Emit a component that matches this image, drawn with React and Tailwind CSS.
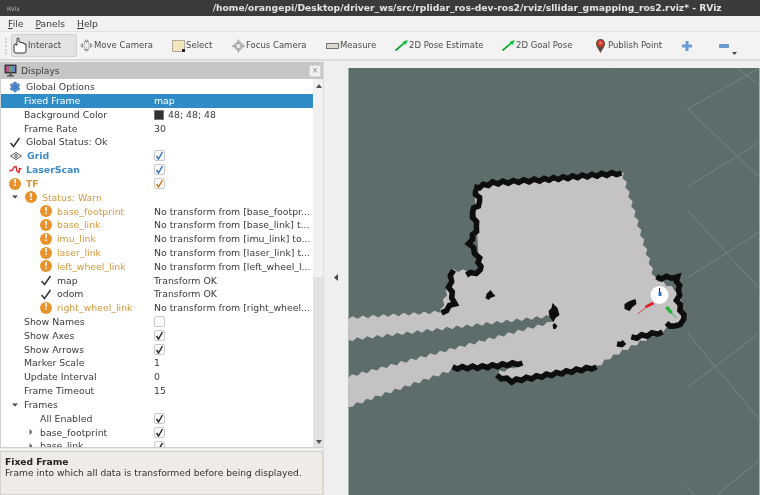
import React from "react";
import { Settings } from "lucide-react";

const font = { fontFamily: '"DejaVu Sans", sans-serif' };

// zigzag along a polyline so the map edges look like occupancy grid cells
function jag(points, amp = 1.6, step = 5) {
  const out = [];
  let flip = false;
  for (let i = 0; i < points.length - 1; i++) {
    const [x1, y1] = points[i];
    const [x2, y2] = points[i + 1];
    const len = Math.hypot(x2 - x1, y2 - y1);
    const n = Math.max(1, Math.round(len / step));
    for (let k = 0; k < n; k++) {
      const t = k / n;
      const d = flip ? amp : -amp;
      flip = !flip;
      out.push([
        x1 + (x2 - x1) * t + (-(y2 - y1) / len) * d,
        y1 + (y2 - y1) * t + ((x2 - x1) / len) * d,
      ]);
    }
  }
  out.push(points[points.length - 1]);
  return out.map((p) => p[0].toFixed(1) + "," + p[1].toFixed(1)).join(" ");
}

const freeSpace = [
  [475, 188], [623, 173], [655, 278], [680, 292], [684, 322], [668, 328], [610, 358],
  [597, 367], [512, 383], [497, 378], [500, 372], [524, 364], [453, 370], [348, 407],
  [348, 377], [553, 322], [552, 316], [348, 340], [348, 318], [440, 312], [442, 310],
  [453, 270], [480, 272],
];

const walls = [
  [[475, 188], [493, 183], [540, 180], [573, 177], [622, 173]],
  [[475, 190], [481, 202], [472, 212], [478, 227], [470, 243], [479, 258], [481, 271], [467, 275]],
  [[453, 270], [450, 287], [455, 303], [442, 313]],
  [[657, 278], [677, 277], [680, 290], [678, 300], [685, 320], [675, 327], [667, 323]],
  [[632, 338], [663, 332]],
  [[618, 345], [625, 342]],
  [[497, 376], [512, 381], [597, 367]],
  [[453, 368], [483, 367], [523, 363]],
];

function MapView() {
  return (
    <svg viewBox="349 68 411 427" className="block w-full h-full">
      <rect x="349" y="68" width="411" height="427" fill="#5c6d6c" />
      <g stroke="#7d8b8a" strokeWidth="0.8" fill="none">
        <path d="M760 68 L688 109 L760 177 M737 68 L760 85 M688 187 L760 142 M688 210 L760 289 M688 278 L760 232 M688 333 L760 420 M688 387 L760 333 M688 487 L695 495 M717 495 L760 460" />
      </g>
      <g stroke="#677877" strokeOpacity="0.6" strokeWidth="1" fill="none">
        <path d="M640 428 L688 387 M640 428 L688 487 M640 428 L560 495 M400 400 L470 495 M688 109 L610 68 M688 187 L640 215" />
      </g>
      <polygon points={jag(freeSpace, 1.5, 5)} fill="#c4c2c3" />
      <g stroke="#0e0e0e" strokeWidth="5.5" fill="none" strokeLinejoin="miter">
        {walls.map((w, i) => (
          <polyline key={i} points={jag(w, 1.2, 5)} />
        ))}
      </g>
      <g fill="#0e0e0e">
        <polygon points="487,294 491,290 494,294 496,296 491,298 489,300 486,298" />
        <polygon points="553,303 558,308 560,315 556,318 554,322 550,317 549,311 552,308" />
        <polygon points="553,325 555,323 558,326 556,329 554,329" />
        <polygon points="625,304 630,301 636,299 637,304 633,307 630,311 625,309" />
      </g>
      <circle cx="660" cy="295" r="9" fill="#ffffff" />
      <path d="M660 288 V296" stroke="#222" strokeWidth="1" />
      <rect x="659" y="292" width="3" height="4" fill="#2f74b5" />
      <path d="M654 303 L646 307" stroke="#e02222" strokeWidth="3" />
      <path d="M647 307 L638 314" stroke="#c9504f" strokeWidth="1" />
      <path d="M667 307 L672 313" stroke="#23b23a" strokeWidth="3.5" />
      <path d="M671 312 L677 318" stroke="#3cb04e" strokeWidth="1" />
    </svg>
  );
}

function Hand() {
  return (
    <svg width="15" height="17" viewBox="0 0 15 17" fill="#fff" stroke="#222" strokeWidth="0.9">
      <path d="M1 8 V14 Q1 16 3 16 H11 Q13 16 13 14 V7 H11 V6 H9 V5.5 H7.5 V5 H6 V1.5 Q5 0.5 4 1.5 V8 H3 V7 Q2 6.5 1 8 Z" />
    </svg>
  );
}

function MoveIcon() {
  return (
    <svg width="13" height="13" viewBox="0 0 13 13" fill="none" stroke="#8a9096" strokeWidth="1">
      <path d="M6.5 0.5 L8.5 2.5 H4.5 Z M6.5 12.5 L8.5 10.5 H4.5 Z M0.5 6.5 L2.5 4.5 V8.5 Z M12.5 6.5 L10.5 4.5 V8.5 Z" />
      <rect x="4" y="4" width="5" height="5" strokeDasharray="1 1" />
    </svg>
  );
}

function SelectIcon() {
  return (
    <svg width="13" height="12" viewBox="0 0 13 12">
      <rect x="0.5" y="0.5" width="12" height="11" fill="#f3e6bf" stroke="#77756c" strokeWidth="0.8" strokeDasharray="1.5 0.7" />
      <rect x="10" y="9" width="3" height="3" fill="#222" />
    </svg>
  );
}

function FocusIcon() {
  return (
    <svg width="14" height="14" viewBox="0 0 14 14">
      <path d="M7 0 L14 7 L7 14 L0 7 Z" fill="#c4c4c0" />
      <path d="M7 0 V14 M0 7 H14" stroke="#90908c" strokeWidth="0.8" />
      <circle cx="7" cy="7" r="3" fill="#e6e6e3" stroke="#8b8b87" strokeWidth="0.8" />
    </svg>
  );
}

function RulerIcon() {
  return (
    <svg width="13" height="6" viewBox="0 0 13 6">
      <rect x="0.5" y="0.5" width="12" height="5" fill="#dcdad0" stroke="#75736c" strokeWidth="1" />
    </svg>
  );
}

function PoseIcon() {
  return (
    <svg width="13" height="11" viewBox="0 0 13 11">
      <path d="M0.5 10.5 L11 1.5" stroke="#12c13a" strokeWidth="1.8" />
      <path d="M13 0 L7.5 1.8 L10.5 5 Z" fill="#12c13a" />
      <path d="M0.5 10.5 L6 5.8" stroke="#0c7a28" strokeWidth="0.8" />
    </svg>
  );
}

function PinIcon() {
  return (
    <svg width="9" height="14" viewBox="0 0 9 14">
      <path d="M4.5 14 L1 8 Q0 6.5 0 4.5 A4.5 4.5 0 0 1 9 4.5 Q9 6.5 8 8 Z" fill="#5f4a3f" />
      <circle cx="4.5" cy="4.5" r="3.4" fill="#cf3a2c" />
      <circle cx="4.5" cy="4" r="1.3" fill="#e88c80" />
    </svg>
  );
}

function PlusIcon() {
  return (
    <svg width="10" height="10" viewBox="0 0 10 10">
      <path d="M3.5 0 H6.5 V3.5 H10 V6.5 H6.5 V10 H3.5 V6.5 H0 V3.5 H3.5 Z" fill="#6b9ad0" />
    </svg>
  );
}

function MinusIcon() {
  return (
    <svg width="10" height="4" viewBox="0 0 10 4">
      <rect width="10" height="4" rx="1" fill="#6b9ad0" />
    </svg>
  );
}

function MonitorIcon() {
  return (
    <svg width="13" height="13" viewBox="0 0 13 13">
      <rect x="0.5" y="0.5" width="12" height="9" fill="#3a3a44" />
      <rect x="2" y="2" width="3" height="6" fill="#b0568c" />
      <rect x="5" y="2" width="3" height="6" fill="#5ea85e" />
      <rect x="8" y="2" width="3" height="6" fill="#6a8ac0" />
      <rect x="5" y="10" width="3" height="1.5" fill="#555" />
      <rect x="3" y="11.5" width="7" height="1" fill="#333" />
    </svg>
  );
}

function Warn() {
  return (
    <span className="flex items-center justify-center w-[12px] h-[12px] rounded-full bg-[#e8922c] text-white text-[9px] font-bold leading-none shrink-0">
      !
    </span>
  );
}

function Tick() {
  return (
    <svg width="12" height="11" viewBox="0 0 12 11" fill="none" className="shrink-0">
      <path d="M1.5 6 L4.5 9.5 L10.5 1" stroke="#333" strokeWidth="1.5" />
    </svg>
  );
}

function Eye() {
  return (
    <svg width="12" height="8" viewBox="0 0 12 8" fill="none" stroke="#555" strokeWidth="1" className="shrink-0">
      <path d="M0.5 4 L6 0.5 L11.5 4 L6 7.5 Z" />
      <circle cx="6" cy="4" r="1.4" />
    </svg>
  );
}

function Laser() {
  return (
    <svg width="13" height="9" viewBox="0 0 13 9" fill="none" className="shrink-0">
      <path d="M0.5 6 L3.5 5 L5 2 L7 1.5 L8 6 L10 7.5 L10.5 3.5 L12.5 4" stroke="#e8202a" strokeWidth="1.4" />
    </svg>
  );
}

function Check({ on, color }) {
  return (
    <span className="flex items-center justify-center w-[11px] h-[11px] border border-[#c9c9c9] rounded-[2px] bg-[#fbfbfb]">
      {on && (
        <svg width="9" height="9" viewBox="0 0 9 9" fill="none">
          <path d="M1.5 5 L3.5 8 L7.5 1" stroke={color || "#222"} strokeWidth="1.4" />
        </svg>
      )}
    </span>
  );
}

function Triangle({ open }) {
  return (
    <svg width="6" height="6" viewBox="0 0 6 6" className="shrink-0">
      {open ? <path d="M0 1.5 H6 L3 4.5 Z" fill="#444" /> : <path d="M1.5 0 V6 L4.5 3 Z" fill="#666" />}
    </svg>
  );
}

const tools = [
  { label: "Move Camera", icon: <MoveIcon />, cls: "ml-[3px] w-[92px]" },
  { label: "Select", icon: <SelectIcon />, cls: "w-[60px]" },
  { label: "Focus Camera", icon: <FocusIcon />, cls: "w-[94px]" },
  { label: "Measure", icon: <RulerIcon />, cls: "w-[69px]" },
  { label: "2D Pose Estimate", icon: <PoseIcon />, cls: "w-[107px]" },
  { label: "2D Goal Pose", icon: <PoseIcon />, cls: "w-[92px]" },
  { label: "Publish Point", icon: <PinIcon />, cls: "w-[88px]" },
];

const warnFrames = [
  ["base_footprint", "No transform from [base_footpr..."],
  ["base_link", "No transform from [base_link] t..."],
  ["imu_link", "No transform from [imu_link] to..."],
  ["laser_link", "No transform from [laser_link] t..."],
  ["left_wheel_link", "No transform from [left_wheel_l..."],
];

function Row({ pad, children, value, selected, className }) {
  return (
    <div className={`flex items-center h-[13.82px] ${selected ? "bg-[#308cc6] text-white" : ""}`}>
      <div className={`flex items-center w-[153px] shrink-0 whitespace-nowrap ${pad} ${className || ""}`}>{children}</div>
      <div className="flex items-center gap-[4px] whitespace-nowrap">{value}</div>
    </div>
  );
}

function FrameRow({ name, value, ok }) {
  return (
    <Row pad="pl-[39px] gap-[5px]" className={ok ? "" : "text-[#d2983c]"} value={value}>
      {ok ? <Tick /> : <Warn />}
      {name}
    </Row>
  );
}

export default function App() {
  return (
    <div className="w-[760px] h-[495px] overflow-hidden flex flex-col bg-[#efefef] text-[#3a3a3a] blur-[0.35px]" style={font}>
      <div className="h-[16px] shrink-0 bg-[#3b3b3b] flex items-center">
        <span className="pl-[7px] text-[6px] text-[#bbb]">RViz</span>
        <span className="ml-[193px] text-[9.2px] font-bold text-[#e4e4e4] whitespace-nowrap">
          /home/orangepi/Desktop/driver_ws/src/rplidar_ros-dev-ros2/rviz/sllidar_gmapping_ros2.rviz* - RViz
        </span>
      </div>

      <div className="h-[16px] shrink-0 bg-[#f1f1f1] flex items-center gap-[12px] pl-[8px] text-[9.2px] border-b border-[#e2e2e2]">
        <span><u>F</u>ile</span>
        <span><u>P</u>anels</span>
        <span><u>H</u>elp</span>
      </div>

      <div className="h-[29px] shrink-0 bg-[#f3f3f3] border-b-2 border-[#dcdcdc] flex items-center pl-[5px] text-[8.5px] text-[#4a4a4a]">
        <div className="w-[2px] h-[16px] mr-[4px] border-l-2 border-dotted border-[#d4d4d4]" />
        <div className="w-[66px] h-[23px] bg-[#e3e3e3] border border-[#cfcfcf] rounded-[2px] flex items-center pl-[1px]">
          <Hand />
          Interact
        </div>
        {tools.map((t) => (
          <div key={t.label} className={`flex items-center gap-[1px] whitespace-nowrap ${t.cls}`}>
            <span className="flex justify-center w-[13px]">{t.icon}</span>
            {t.label}
          </div>
        ))}
        <div className="w-[37px] flex"><PlusIcon /></div>
        <div className="w-[10px] flex"><MinusIcon /></div>
        <svg width="5" height="3" viewBox="0 0 5 3" className="mt-[15px] ml-[3px]">
          <path d="M0 0 H5 L2.5 3 Z" fill="#444" />
        </svg>
      </div>

      <div className="flex flex-1 min-h-0">
        <div className="w-[324px] shrink-0 flex flex-col pt-[1px] border-r border-[#dcdcdc]">
          <div className="h-[17px] bg-[#c6c6c6] flex items-center pl-[4px] gap-[4px] text-[9.2px] shrink-0">
            <MonitorIcon />
            <span className="flex-1">Displays</span>
            <span className="flex items-center justify-center w-[12px] h-[12px] mr-[2px] bg-[#f1f1f1] border border-[#d6d6d6] text-[8px] text-[#888] leading-none">×</span>
          </div>

          <div className="flex h-[369px] shrink-0 bg-white border-l border-[#cfcfcf] border-b text-[9.35px] leading-none overflow-hidden">
            <div className="w-[312px] shrink-0 pt-[1px] overflow-hidden">
              <Row pad="pl-[8px] gap-[5px]" value="">
                <Settings size={12} className="shrink-0 text-[#5b8ed0]" fill="#5b8ed0" stroke="#3f74bb" />
                Global Options
              </Row>
              <Row pad="pl-[23px]" value="map" selected>Fixed Frame</Row>
              <Row pad="pl-[23px]" value={<><span className="w-[10px] h-[10px] bg-[#303030] border border-[#777]" />48; 48; 48</>}>Background Color</Row>
              <Row pad="pl-[23px]" value="30">Frame Rate</Row>
              <Row pad="pl-[8px] gap-[5px]" value="">
                <Tick />
                Global Status: Ok
              </Row>
              <Row pad="pl-[9px] gap-[5px]" className="font-bold text-[#3d8ac8]" value={<Check on color="#2f6fc0" />}>
                <Eye />
                Grid
              </Row>
              <Row pad="pl-[8px] gap-[4px]" className="font-bold text-[#3d8ac8]" value={<Check on color="#2f6fc0" />}>
                <Laser />
                LaserScan
              </Row>
              <Row pad="pl-[8px] gap-[5px]" className="font-bold text-[#d2983c]" value={<Check on color="#d0701a" />}>
                <Warn />
                TF
              </Row>
              <Row pad="pl-[11px] gap-[5px]" className="text-[#d2983c]" value="">
                <Triangle open />
                <span className="ml-[2px]"><Warn /></span>
                Status: Warn
              </Row>
              {warnFrames.map(([name, value]) => (
                <FrameRow key={name} name={name} value={value} />
              ))}
              <FrameRow name="map" value="Transform OK" ok />
              <FrameRow name="odom" value="Transform OK" ok />
              <FrameRow name="right_wheel_link" value="No transform from [right_wheel..." />
              <Row pad="pl-[23px]" value={<Check />}>Show Names</Row>
              <Row pad="pl-[23px]" value={<Check on />}>Show Axes</Row>
              <Row pad="pl-[23px]" value={<Check on />}>Show Arrows</Row>
              <Row pad="pl-[23px]" value="1">Marker Scale</Row>
              <Row pad="pl-[23px]" value="0">Update Interval</Row>
              <Row pad="pl-[23px]" value="15">Frame Timeout</Row>
              <Row pad="pl-[11px] gap-[6px]" value="">
                <Triangle open />
                Frames
              </Row>
              <Row pad="pl-[39px]" value={<Check on />}>All Enabled</Row>
              <Row pad="pl-[27px] gap-[6px]" value={<Check on />}>
                <Triangle />
                base_footprint
              </Row>
              <Row pad="pl-[27px] gap-[6px]" value={<Check on />}>
                <Triangle />
                base_link
              </Row>
            </div>
            <div className="w-[11px] shrink-0 flex flex-col bg-[#e2e2e2]">
              <div className="h-[198px] bg-[#f1f1f1] flex justify-center pt-[5px]">
                <svg width="6" height="4" viewBox="0 0 6 4"><path d="M3 0 L6 4 H0 Z" fill="#555" /></svg>
              </div>
              <div className="flex-1 flex justify-center items-end pb-[3px]">
                <svg width="6" height="4" viewBox="0 0 6 4"><path d="M0 0 H6 L3 4 Z" fill="#555" /></svg>
              </div>
            </div>
          </div>

          <div className="mt-[3px] flex-1 bg-[#efebe7] border border-[#d6d2ce] pl-[4px] pt-[4px] text-[9.2px] leading-[11px]">
            <div className="font-bold text-[#222]">Fixed Frame</div>
            <div className="text-[#333] whitespace-nowrap">Frame into which all data is transformed before being displayed.</div>
          </div>
        </div>

        <div className="flex-1 min-w-0 flex flex-col">
          <div className="h-[7px] shrink-0 bg-[#efefef]" />
          <div className="flex flex-1 min-h-0">
            <div className="w-[24px] shrink-0 flex items-center justify-center pb-[8px]">
              <svg width="4" height="7" viewBox="0 0 4 7"><path d="M4 0 V7 L0 3.5 Z" fill="#444" /></svg>
            </div>
            <div className="flex-1 min-w-0">
              <MapView />
            </div>
          </div>
        </div>
      </div>
    </div>
  );
}
